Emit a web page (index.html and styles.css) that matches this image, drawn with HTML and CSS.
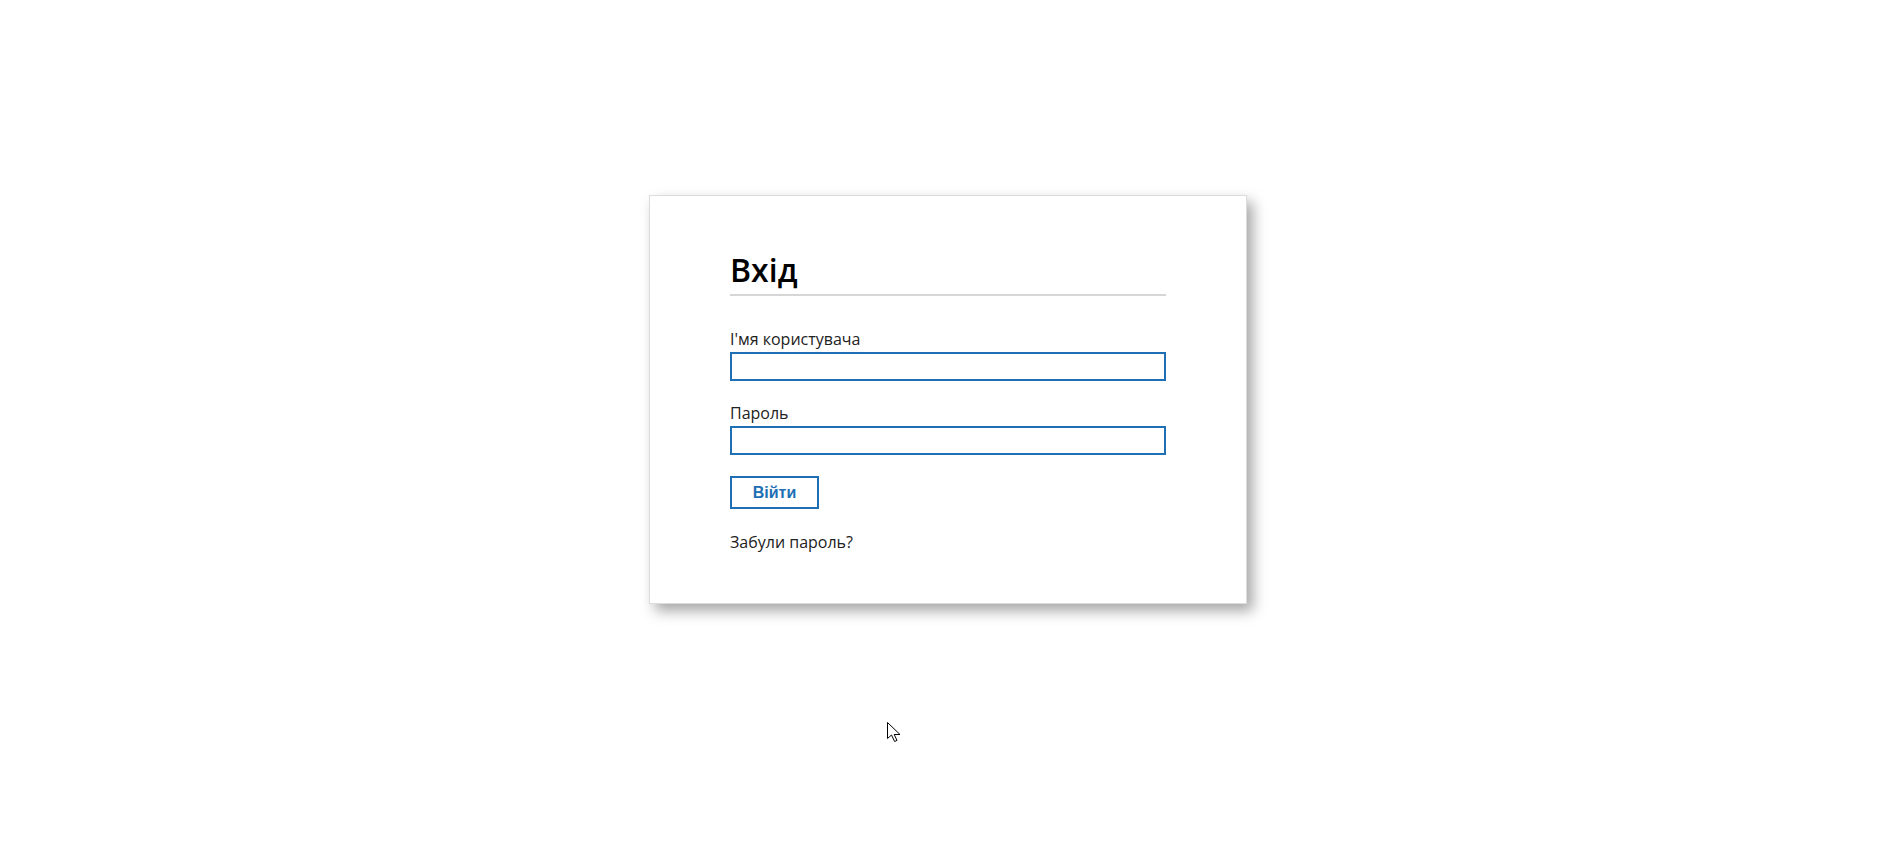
FILE: index.html
```html
<!DOCTYPE html>
<html lang="uk">
<head>
<meta charset="utf-8">
<title>Вхід</title>
<link rel="stylesheet" href="styles.css">
</head>
<body>
<main class="page">
  <form class="card">
    <h1 class="title">Вхід</h1>
    <label class="label" for="user">І'мя користувача</label>
    <input class="field" id="user" type="text">
    <label class="label label-gap" for="pass">Пароль</label>
    <input class="field" id="pass" type="password">
    <button class="btn" type="button">Війти</button>
    <a class="forgot" href="#">Забули пароль?</a>
  </form>
</main>
<svg class="cursor" width="16" height="21" viewBox="0 0 16 21">
  <path d="M0.5 0.5 L0.5 16.5 L4.5 13 L7.6 19.5 L10 18.4 L7.2 12.5 L13 12.5 Z" fill="#fff" stroke="#000" stroke-width="1" stroke-linejoin="miter"/>
</svg>
</body>
</html>
```
FILE: styles.css
```css
html, body {
  margin: 0;
  padding: 0;
  background: #fff;
}
body {
  position: relative;
  min-height: 846px;
  font-family: "Open Sans", "Noto Sans", sans-serif;
  color: #222;
}
.page {
  display: flex;
  justify-content: center;
  padding-top: 195px;
  padding-left: 4px;
}
.card {
  box-sizing: border-box;
  width: 598px;
  padding: 55px 80px 50px 80px;
  border: 1px solid #dcdcdc;
  background: #fff;
  box-shadow: 6px 7px 13px rgba(0, 0, 0, 0.35);
  display: flex;
  flex-direction: column;
  align-items: flex-start;
}
.title {
  align-self: stretch;
  margin: 0 0 32px;
  padding-bottom: 5px;
  border-bottom: 2px solid #d6d6d6;
  font-size: 32px;
  font-weight: 600;
  line-height: 38px;
  color: #000;
}
.label {
  font-size: 16px;
  line-height: 22px;
  margin-bottom: 2px;
  color: #222;
}
.label-gap {
  margin-top: 21px;
}
.field {
  align-self: stretch;
  box-sizing: border-box;
  height: 29px;
  margin: 0;
  border: 2px solid #1e6fb4;
  background: #fff;
  outline: none;
  font-family: inherit;
  font-size: 16px;
  padding: 0 4px;
}
.btn {
  box-sizing: border-box;
  margin-top: 21px;
  height: 33px;
  width: 89px;
  padding: 0;
  border: 2px solid #1e6fb4;
  background: #fff;
  color: #1e6fb4;
  font-family: "Liberation Sans", Arial, sans-serif;
  font-weight: 700;
  font-size: 16px;
}
.forgot {
  margin-top: 22px;
  font-size: 16px;
  line-height: 22px;
  color: #222;
  text-decoration: none;
}
.cursor {
  position: absolute;
  left: 887px;
  top: 722px;
}
```
